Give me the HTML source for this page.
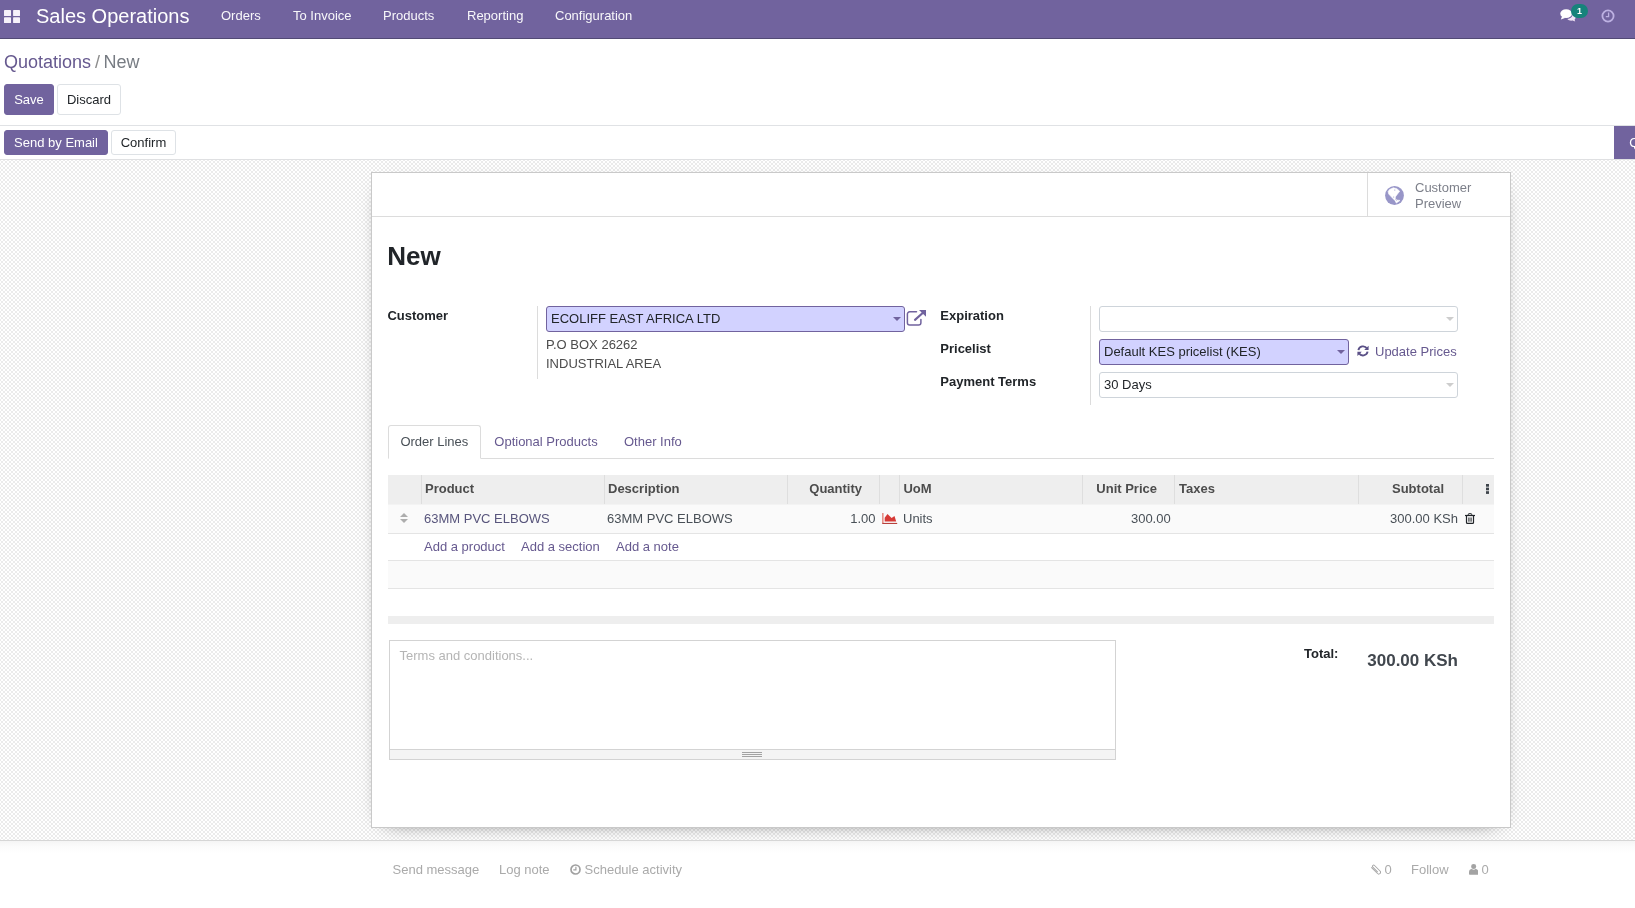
<!DOCTYPE html>
<html><head><meta charset="utf-8">
<style>
*{box-sizing:border-box;}
html,body{margin:0;padding:0;}
body{width:1635px;height:908px;overflow:hidden;background:#fff;font-family:"Liberation Sans",sans-serif;font-size:13px;color:#4c4c4c;position:relative;}
a{color:#66598f;text-decoration:none;}
.nav{position:absolute;left:0;top:0;width:1635px;height:39px;background:#71639e;border-bottom:1px solid #524a75;color:#fff;}
.nav .apps{position:absolute;left:4px;top:9.900px;}
.nav .brand{position:absolute;left:36px;top:4px;font-size:20px;line-height:24px;color:#fff;}
.nav .mi{position:absolute;top:8px;font-size:13px;line-height:16px;color:#fff;opacity:.95;}
.cp{position:absolute;left:0;top:39px;width:1635px;height:87px;background:#fff;border-bottom:1px solid #e0e2e5;}
.bc{position:absolute;left:4px;top:12px;font-size:18px;line-height:22px;color:#66598f;}
.bc .sep{color:#8c8c8c;padding:0 3.4px 0 4px;}
.bc .act{color:#777c83;}
.btn{position:absolute;height:31px;border-radius:3px;font-size:13px;line-height:29px;text-align:center;border:1px solid transparent;}
.btn.p{background:#71639e;color:#fff;border-color:#71639e;}
.btn.s{background:#fff;color:#212529;border-color:#dee2e6;}
.sb{position:absolute;left:0;top:126px;width:1635px;height:34px;background:#fff;border-bottom:1px solid #dfe0e2;}
.sb .btn{height:25px;line-height:23px;top:4px;}
.bg{position:absolute;left:0;top:160px;width:1635px;height:680px;background-color:#f4f4f4;
 background-image:conic-gradient(#ececec 25%,#fafafa 0 50%,#ececec 0 75%,#fafafa 0);background-size:2px 2px;}
.sheet{position:absolute;left:371px;top:172px;width:1140px;height:656px;background:#fff;border:1px solid #c9c9c9;box-shadow:0 5px 20px -15px #000;}
.chat{position:absolute;left:0;top:840px;width:1635px;height:68px;background:linear-gradient(#f5f5f5,#fcfcfc 6px,#fff 12px);border-top:1px solid #d6d6d6;}

.bg{background-color:#fff;background-image:conic-gradient(#fff 25%,#ebebeb 0 50%,#fff 0 75%,#ebebeb 0);background-size:4px 4px;background-position:1px 1px;}
.abs{position:absolute;white-space:nowrap;}
.lbl{position:absolute;font-weight:bold;color:#212529;font-size:13px;line-height:16px;white-space:nowrap;}
.inp{position:absolute;height:26px;border:1px solid #ced4da;border-radius:3px;background:#fff;font-size:13px;line-height:24px;padding-left:4px;color:#212529;white-space:nowrap;}
.inp.req{background:#d2d2ff;border-color:#71639e;}
.caret{position:absolute;width:0;height:0;border-left:4px solid transparent;border-right:4px solid transparent;border-top:4px solid #71639e;}
.caret.g{border-top-color:#cdcdcd;}
.vl{position:absolute;width:1px;background:#dcdcdc;}
.hl{position:absolute;height:1px;background:#dcdcdc;}.hl.t{background:#e4e4e4;}
.th{position:absolute;top:475px;height:30px;line-height:28px;font-weight:bold;color:#4c4c4c;font-size:13px;white-space:nowrap;}
.td{position:absolute;top:505px;height:28px;line-height:27px;font-size:13px;color:#495057;white-space:nowrap;}
.r{text-align:right;}
.ch{position:absolute;top:0;font-size:13px;line-height:16px;color:#aaaaaa;white-space:nowrap;}
</style></head><body><div id="w" style="position:absolute;left:0;top:0;width:1635px;height:908px;will-change:transform;">
<div class="nav">
 <svg class="apps" width="16" height="13.200" viewBox="0 0 16 13.200"><g fill="#f6f1fa"><rect x="0" y="0" width="7" height="6.100" rx=".7"/><rect x="9.100" y="0" width="6.900" height="6.100" rx=".7"/><rect x="0" y="7.200" width="7" height="6" rx=".7"/><rect x="9.100" y="7.200" width="6.900" height="6" rx=".7"/></g></svg>

 <svg style="position:absolute;left:1559.800px;top:9.400px" width="16" height="13" viewBox="0 0 17 14"><ellipse cx="6.500" cy="5" rx="6.300" ry="4.700" fill="#fff"/><path d="M2 8l-1.200 3.200L6 9.500z" fill="#fff"/><path d="M13.500 5.500c2 .6 3.300 1.900 3.300 3.500 0 1-.5 1.800-1.300 2.500l.8 2-2.800-1.100c-2.300.4-4.500-.1-5.700-1.500 3.200-.2 5.700-2.300 5.700-5.400z" fill="#f3e6f7"/></svg>
 <div style="position:absolute;left:1571px;top:4px;width:17px;height:14px;border-radius:7px;background:#17837b;color:#fff;font-size:9px;font-weight:bold;line-height:14px;text-align:center;">1</div>
 <svg style="position:absolute;left:1600.600px;top:8.600px" width="14" height="14" viewBox="0 0 14 14"><circle cx="7" cy="7" r="5.600" fill="none" stroke="#bdb1e2" stroke-width="1.800"/><path d="M7.600 3.600v4H4.800" fill="none" stroke="#bdb1e2" stroke-width="1.300"/></svg>
 <div class="brand">Sales Operations</div>
 <div class="mi" style="left:221px">Orders</div>
 <div class="mi" style="left:293px">To Invoice</div>
 <div class="mi" style="left:383px">Products</div>
 <div class="mi" style="left:467px">Reporting</div>
 <div class="mi" style="left:555px">Configuration</div>
</div>
<div class="cp">
 <div class="bc">Quotations<span class="sep">/</span><span class="act">New</span></div>
 <div class="btn p" style="left:4px;top:45px;width:50px;">Save</div>
 <div class="btn s" style="left:57px;top:45px;width:64px;">Discard</div>
</div>
<div class="sb">
 <div class="btn p" style="left:4px;width:104px;">Send by Email</div>
 <div class="btn s" style="left:111px;width:65px;">Confirm</div>
<div style="position:absolute;left:1614px;top:0;width:21px;height:33px;background:#71639e;color:#fff;font-size:13px;line-height:33px;overflow:hidden;white-space:nowrap;"><span style="padding-left:15.300px">Quotation</span></div>
</div>
<div class="bg"></div>

<div class="sheet"></div>
<!-- button box -->
<div class="hl" style="left:372px;top:216px;width:1138px;"></div>
<div class="vl" style="left:1367px;top:173px;height:43px;"></div>
<svg class="abs" style="left:1385px;top:185.800px" width="19" height="19" viewBox="0 0 19 19"><circle cx="9.500" cy="9.500" r="9.400" fill="#9896c8"/><path d="M3.100 5.500L4.600 3.400L8.300 1.800L11.900 2.700L14.700 5.200L12.500 8L10.700 10.400L10.100 12.200L11.600 14.100L15 14.400L11.300 17.100L10.100 14.700L7 11.600L3.700 8Z" fill="#fff" stroke="#fff" stroke-width=".6" stroke-linejoin="round"/><circle cx="9.800" cy="4" r=".6" fill="#9896c8"/><circle cx="8.700" cy="11" r=".55" fill="#9896c8"/><path d="M10.400 13.300l1.300 1.400" stroke="#9896c8" stroke-width=".6"/></svg>
<div class="abs" style="left:1415px;top:180px;font-size:13px;line-height:16px;color:#7c7f89;">Customer<br>Preview</div>
<!-- title -->
<div class="abs" style="left:387.300px;top:241px;font-size:26px;line-height:30px;font-weight:bold;color:#212529;">New</div>
<!-- left group -->
<div class="lbl" style="left:387.400px;top:308px;">Customer</div>
<div class="vl" style="left:537px;top:306px;height:73px;"></div>
<div class="inp req" style="left:546px;top:306px;width:359px;">ECOLIFF EAST AFRICA LTD</div>
<div class="caret" style="left:893px;top:317px;"></div>
<svg class="abs" style="left:906px;top:309px" width="21" height="18" viewBox="0 0 21 18"><path d="M14.900 10.400v3.300a2.300 2.300 0 0 1-2.300 2.300H3.700a2.300 2.300 0 0 1-2.300-2.300V5.100a2.300 2.300 0 0 1 2.300-2.300h6.800" fill="none" stroke="#71639e" stroke-width="1.500" stroke-linecap="round"/><path d="M9 10.900L17.800 3" stroke="#71639e" stroke-width="2.100" stroke-linecap="round"/><path d="M13 1h7v6.800z" fill="#71639e"/></svg>
<div class="abs" style="left:546px;top:335px;font-size:13px;line-height:19px;color:#4c4c4c;">P.O BOX 26262<br>INDUSTRIAL AREA</div>
<!-- right group -->
<div class="lbl" style="left:940.300px;top:308px;">Expiration</div>
<div class="lbl" style="left:940.300px;top:341px;">Pricelist</div>
<div class="lbl" style="left:940.300px;top:374px;">Payment Terms</div>
<div class="vl" style="left:1090px;top:306px;height:99px;"></div>
<div class="inp" style="left:1099px;top:306px;width:359px;"></div>
<div class="caret g" style="left:1446px;top:317px;"></div>
<div class="inp req" style="left:1099px;top:339px;width:250px;">Default KES pricelist (KES)</div>
<div class="caret" style="left:1337px;top:350px;"></div>
<svg class="abs" style="left:1357px;top:345.300px" width="12" height="11.800" viewBox="0 0 12 12" preserveAspectRatio="none"><path d="M10 3.600A4.700 4.700 0 0 0 1.400 5.200M2 8.400A4.700 4.700 0 0 0 10.600 6.800" fill="none" stroke="#5b5187" stroke-width="1.900"/><path d="M11.600.7v4.400H7.200zM.4 11.300V6.900h4.400z" fill="#5b5187"/></svg>
<div class="abs" style="left:1375px;top:344px;font-size:13px;line-height:16px;color:#66598f;">Update Prices</div>
<div class="inp" style="left:1099px;top:372px;width:359px;">30 Days</div>
<div class="caret g" style="left:1446px;top:383px;"></div>
<!-- tabs -->
<div class="hl" style="left:388px;top:458px;width:1106px;"></div>
<div class="abs" style="left:388px;top:425px;width:93px;height:34px;border:1px solid #dcdcdc;border-bottom-color:#fff;border-radius:3px 3px 0 0;background:#fff;"></div>
<div class="abs" style="left:400.400px;top:434px;font-size:13px;line-height:16px;color:#495057;">Order Lines</div>
<div class="abs" style="left:494.300px;top:434px;font-size:13px;line-height:16px;color:#66598f;">Optional Products</div>
<div class="abs" style="left:624px;top:434px;font-size:13px;line-height:16px;color:#66598f;">Other Info</div>
<!-- table -->
<div class="abs" style="left:388px;top:475px;width:1106px;height:29px;background:#eeeeee;"></div><div class="abs" style="left:388px;top:504px;width:1106px;height:1px;background:#f3f3f3;"></div>
<div class="abs" style="left:388px;top:505px;width:1106px;height:28px;background:#fafafa;"></div>
<div class="abs" style="left:388px;top:561px;width:1106px;height:27px;background:#fafafa;"></div>
<div class="hl t" style="left:388px;top:533px;width:1106px;"></div>
<div class="hl t" style="left:388px;top:560px;width:1106px;"></div>
<div class="hl t" style="left:388px;top:588px;width:1106px;"></div>
<div class="abs" style="left:388px;top:616px;width:1106px;height:8px;background:#eeeeee;"></div>
<div class="vl" style="left:421px;top:475px;height:29px;background:#dedede"></div>
<div class="vl" style="left:604px;top:475px;height:29px;background:#dedede"></div>
<div class="vl" style="left:787px;top:475px;height:29px;background:#dedede"></div>
<div class="vl" style="left:879px;top:475px;height:29px;background:#dedede"></div>
<div class="vl" style="left:899px;top:475px;height:29px;background:#dedede"></div>
<div class="vl" style="left:1082px;top:475px;height:29px;background:#dedede"></div>
<div class="vl" style="left:1174px;top:475px;height:29px;background:#dedede"></div>
<div class="vl" style="left:1358px;top:475px;height:29px;background:#dedede"></div>
<div class="vl" style="left:1462px;top:475px;height:29px;background:#dedede"></div>
<div class="th" style="left:425px;">Product</div>
<div class="th" style="left:608px;">Description</div>
<div class="th r" style="left:762px;width:100px;">Quantity</div>
<div class="th" style="left:903.400px;">UoM</div>
<div class="th r" style="left:1057px;width:100px;">Unit Price</div>
<div class="th" style="left:1179px;">Taxes</div>
<div class="th r" style="left:1344px;width:100px;">Subtotal</div>
<svg class="abs" style="left:1486px;top:484px" width="3" height="10" viewBox="0 0 3 10"><rect x="0" y="0" width="3" height="2.7" fill="#3d434a"/><rect x="0" y="3.600" width="3" height="2.700" fill="#3d434a"/><rect x="0" y="7.200" width="3" height="2.700" fill="#3d434a"/></svg>
<svg class="abs" style="left:400px;top:513px" width="8" height="10" viewBox="0 0 8 10"><path d="M0 4L4 0L8 4zM0 6L4 10L8 6z" fill="#adadad"/></svg>
<div class="td" style="left:424px;color:#58557c;">63MM PVC ELBOWS</div>
<div class="td" style="left:607px;">63MM PVC ELBOWS</div>
<div class="td r" style="left:775.500px;width:100px;">1.00</div>
<svg class="abs" style="left:882px;top:513px" width="16" height="11" viewBox="0 0 16 11"><path d="M.2 0h1.300v10H.2z" fill="#e2776f"/><path d="M.2 9.900H15.200V11H.2z" fill="#b8403c"/><path d="M2.700 8.600V4.700L5.500.9L9.600 4.900L12.500 2.900L14.200 8.600z" fill="#d63a36"/></svg>
<div class="td" style="left:903px;">Units</div>
<div class="td r" style="left:1070.7px;width:100px;">300.00</div>
<div class="td r" style="left:1358px;width:100px;">300.00 KSh</div>
<svg class="abs" style="left:1465px;top:513px" width="10" height="11" viewBox="0 0 10 11"><g fill="none" stroke="#212529"><path d="M0 2.500h10" stroke-width="1.200"/><path d="M3.300 2.400V1.300a.6.6 0 0 1 .6-.6h2.200a.6.6 0 0 1 .6.600V2.400" stroke-width="1"/><path d="M1.500 2.800v6.600a1 1 0 0 0 1 1h5a1 1 0 0 0 1-1V2.800" stroke-width="1.200"/><path d="M3.700 4.500v4.200M5 4.500v4.200M6.300 4.500v4.200" stroke-width=".75"/></g></svg>
<div class="abs" style="left:424px;top:539px;font-size:13px;line-height:16px;color:#66598f;">Add a product</div>
<div class="abs" style="left:521px;top:539px;font-size:13px;line-height:16px;color:#66598f;">Add a section</div>
<div class="abs" style="left:616px;top:539px;font-size:13px;line-height:16px;color:#66598f;">Add a note</div>
<!-- terms -->
<div class="abs" style="left:389px;top:640px;width:727px;height:120px;border:1px solid #d3d3d3;background:#fff;"></div>
<div class="abs" style="left:390px;top:749px;width:725px;height:10px;background:#f4f4f4;border-top:1px solid #d3d3d3;"></div>
<div class="abs" style="left:742px;top:752px;width:20px;height:1px;background:#a3a3a3;"></div><div class="abs" style="left:742px;top:754px;width:20px;height:1px;background:#a3a3a3;"></div><div class="abs" style="left:742px;top:756px;width:20px;height:1px;background:#a3a3a3;"></div>
<div class="abs" style="left:399.500px;top:648px;font-size:13px;line-height:16px;color:#b5b5b5;">Terms and conditions...</div>
<div class="lbl" style="left:1304px;top:646px;">Total:</div>
<div class="abs" style="left:1358px;top:651px;width:100px;text-align:right;font-size:17px;line-height:20px;font-weight:bold;color:#41474e;">300.00 KSh</div>

<div class="chat">
<div class="ch" style="left:392.5px;top:21px;">Send message</div>
<div class="ch" style="left:499px;top:21px;">Log note</div>
<svg class="abs" style="left:569.700px;top:23px" width="11" height="11" viewBox="0 0 11 11"><circle cx="5.500" cy="5.500" r="4.500" fill="none" stroke="#a0a0a0" stroke-width="1.700"/><path d="M5.900 2.800v3.100H3.300" fill="none" stroke="#a0a0a0" stroke-width="1.200"/></svg>
<div class="ch" style="left:584.5px;top:21px;">Schedule activity</div>
<div class="ch" style="left:1384.500px;top:21px;">0</div>
<div class="ch" style="left:1411px;top:21px;">Follow</div>
<div class="ch" style="left:1481.500px;top:21px;">0</div>
<svg class="abs" style="left:1468.900px;top:23px" width="9.400" height="10.800" viewBox="0 0 9.400 10.800"><circle cx="4.700" cy="2.600" r="2.500" fill="#a3a3a3"/><path d="M0 10.100V8.300C0 6.300 1.300 5.100 2.900 5.100c.5.500 1.100.700 1.800.700s1.300-.2 1.800-.700c1.600 0 2.900 1.200 2.900 3.200v1.800a.7.700 0 0 1-.7.700H.7a.7.700 0 0 1-.7-.7z" fill="#a3a3a3"/></svg>
<svg class="abs" style="left:1371px;top:23px" width="10" height="11" viewBox="0 0 10 11"><g transform="translate(5,5.500) rotate(-45)"><path d="M-1.800 -5V3.900a1.800 1.800 0 0 0 3.600 0V-3.900a1.200 1.200 0 0 0-2.400 0V3" fill="none" stroke="#a6a6a6" stroke-width=".95"/></g></svg>
</div>
</div></body></html>
